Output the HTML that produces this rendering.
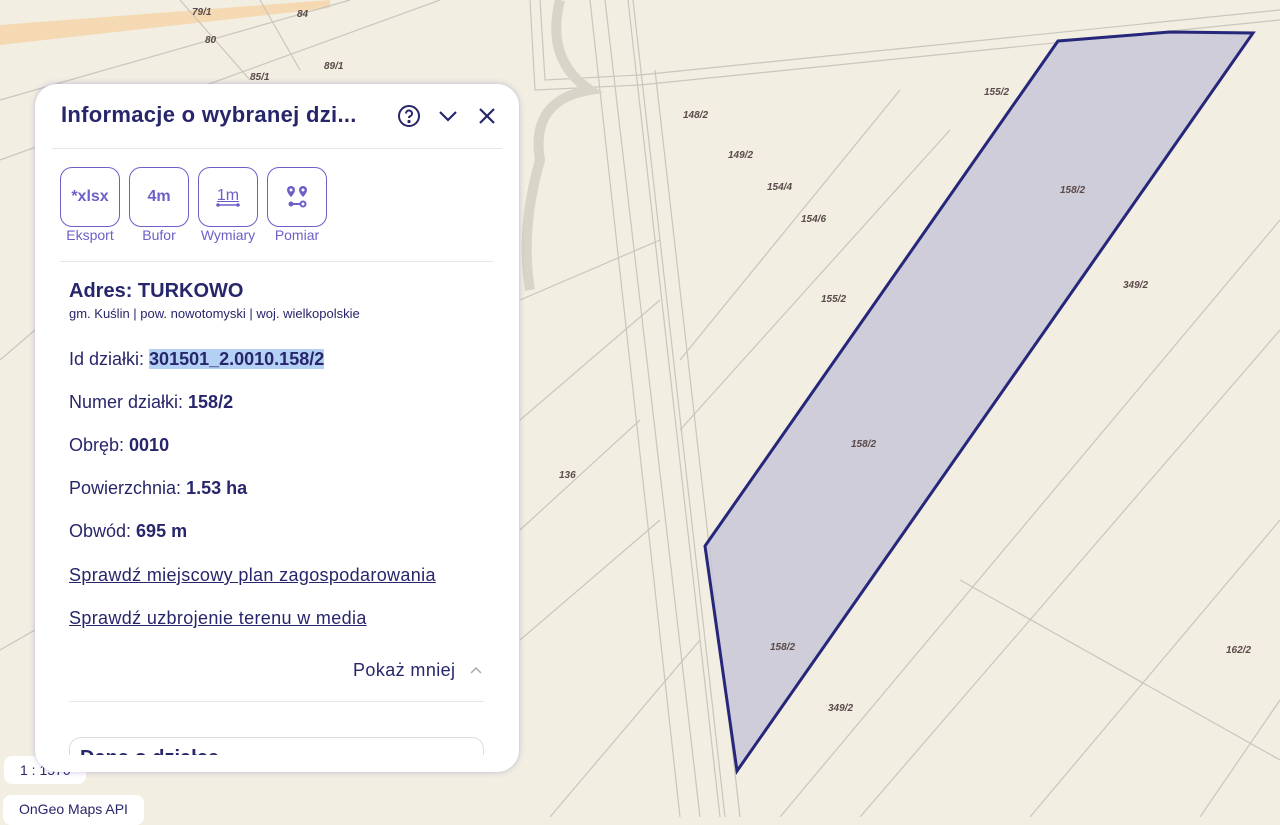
<!DOCTYPE html>
<html><head><meta charset="utf-8"><style>
*{margin:0;padding:0;box-sizing:border-box}
body{width:1280px;height:817px;overflow:hidden;background:#f2eee2;font-family:"Liberation Sans",sans-serif;position:relative;color:#27266a}
svg.map{position:absolute;left:0;top:0}
.panel{position:absolute;left:35px;top:84px;width:484px;height:688px;background:#fff;border-radius:22px;box-shadow:0 0 6px rgba(90,80,180,.35);overflow:hidden;z-index:2}
.inner{position:absolute;left:0;top:0;width:484px;height:671px;overflow:hidden}
.title{position:absolute;left:26px;top:18px;font-size:22px;font-weight:bold;color:#27266a;letter-spacing:.3px}
.hr{position:absolute;height:1px;background:#e6e6ee}
.btn{position:absolute;top:83px;width:60px;height:60px;border:1.5px solid #6c5fc7;border-radius:12px;color:#6c5fc7;font-weight:bold;font-size:16px;display:flex;align-items:center;justify-content:center}
.lbl{position:absolute;top:143px;font-size:14px;color:#6c5fc7;width:80px;text-align:center}
.t{position:absolute;left:34px;font-size:18px;color:#27266a;white-space:nowrap}
.t b{font-weight:bold}
.u{text-decoration:underline;letter-spacing:.35px}
.chip{position:absolute;background:#fff;border-radius:8px;font-size:14px;color:#27266a;padding:0 16px;white-space:nowrap}
</style></head><body>
<svg class="map" width="1280" height="817" viewBox="0 0 1280 817">
<path d="M0 25 L330 0 L330 8 L0 45Z" fill="#f5d9b3"/>
<g stroke="#c9c6bc" stroke-width="1.2" fill="none">
<path d="M540 0 L545 80 L640 75 L1280 10"/><path d="M530 0 L535 90 L640 85 L1280 20"/>
<path d="M590 0 L680 817"/><path d="M605 0 L700 817"/><path d="M628 0 L720 817"/><path d="M633 0 L725 817"/>
<path d="M655 70 L740 817"/><path d="M520 300 L660 240"/><path d="M0 100 L350 0"/><path d="M0 160 L440 0"/>
<path d="M180 0 L250 80"/><path d="M260 0 L300 70"/><path d="M0 360 L35 330"/><path d="M520 420 L660 300"/>
<path d="M780 817 L1280 220"/><path d="M860 817 L1280 330"/><path d="M960 580 L1280 760"/><path d="M1030 817 L1280 520"/>
<path d="M1200 817 L1280 700"/><path d="M680 360 L900 90"/><path d="M680 430 L950 130"/><path d="M0 650 L35 630"/>
<path d="M520 530 L640 420"/><path d="M520 640 L660 520"/><path d="M550 817 L700 640"/>
</g>
<path d="M560 0 Q545 60 590 90 Q530 100 540 160 Q520 230 530 290" stroke="#d8d4c8" stroke-width="10" fill="none"/>
<polygon points="1058,41 1170,32 1253,33 737,771 705,546" fill="#c8c7d7" fill-opacity=".85" stroke="#26267a" stroke-width="3"/>
<g font-size="10" font-style="italic" font-weight="bold" fill="#5a4a4a" font-family="Liberation Sans">
<text x="192" y="15">79/1</text><text x="297" y="17">84</text><text x="205" y="43">80</text><text x="250" y="80">85/1</text><text x="324" y="69">89/1</text>
<text x="984" y="95">155/2</text><text x="683" y="118">148/2</text><text x="728" y="158">149/2</text><text x="767" y="190">154/4</text><text x="1060" y="193">158/2</text>
<text x="801" y="222">154/6</text><text x="1123" y="288">349/2</text><text x="821" y="302">155/2</text><text x="851" y="447">158/2</text><text x="559" y="478">136</text>
<text x="770" y="650">158/2</text><text x="1226" y="653">162/2</text><text x="828" y="711">349/2</text>
</g></svg>
<div class="panel"><div class="inner">
<div class="title">Informacje o wybranej dzi...</div>
<svg style="position:absolute;left:362px;top:20px" width="24" height="24" viewBox="0 0 24 24" fill="none" stroke="#27266a" stroke-width="2"><circle cx="12" cy="12" r="10"/><path d="M9 9.5a3 3 0 1 1 4 2.8c-.7.3-1 .9-1 1.7"/><circle cx="12" cy="17.5" r=".6" fill="#27266a"/></svg>
<svg style="position:absolute;left:402px;top:22px" width="22" height="20" viewBox="0 0 22 20" fill="none" stroke="#27266a" stroke-width="2.2"><path d="M3 6 L11 14 L19 6"/></svg>
<svg style="position:absolute;left:442px;top:22px" width="20" height="20" viewBox="0 0 20 20" stroke="#27266a" stroke-width="2.2"><path d="M3 3 L17 17 M17 3 L3 17"/></svg>
<div class="hr" style="left:17px;top:64px;width:450px"></div>
<div class="btn" style="left:25px">*xlsx</div>
<div class="btn" style="left:94px">4m</div>
<div class="btn" style="left:163px;font-weight:normal;flex-direction:column"><span style="text-decoration:underline;line-height:16px">1m</span><svg width="24" height="4" style="margin-top:-1px"><path d="M2 2 H22" stroke="#6c5fc7" stroke-width="1.5"/><circle cx="2" cy="2" r="1.8" fill="#6c5fc7"/><circle cx="22" cy="2" r="1.8" fill="#6c5fc7"/></svg></div>
<div class="btn" style="left:232px"><svg width="24" height="24" viewBox="0 0 24 24" fill="#6c5fc7"><path d="M6 1a4 4 0 0 1 4 4c0 3-4 7-4 7s-4-4-4-7a4 4 0 0 1 4-4z"/><path d="M18 1a4 4 0 0 1 4 4c0 3-4 7-4 7s-4-4-4-7a4 4 0 0 1 4-4z"/><circle cx="6" cy="5" r="1.5" fill="#fff"/><circle cx="18" cy="5" r="1.5" fill="#fff"/><path d="M6 19 H18" stroke="#6c5fc7" stroke-width="2"/><circle cx="6" cy="19" r="2.5"/><circle cx="18" cy="19" r="2.5" fill="#fff" stroke="#6c5fc7" stroke-width="2"/></svg></div>
<div class="lbl" style="left:15px">Eksport</div><div class="lbl" style="left:84px">Bufor</div><div class="lbl" style="left:153px">Wymiary</div><div class="lbl" style="left:222px">Pomiar</div>
<div class="hr" style="left:25px;top:177px;width:433px"></div>
<div class="t" style="top:196px;font-size:20px;font-weight:bold">Adres: TURKOWO</div>
<div class="t" style="top:222px;font-size:13px">gm. Kuślin | pow. nowotomyski | woj. wielkopolskie</div>
<div class="t" style="top:265px">Id działki: <b style="background:#b4d0f5">301501_2.0010.158/2</b></div>
<div class="t" style="top:308px">Numer działki: <b>158/2</b></div>
<div class="t" style="top:351px">Obręb: <b>0010</b></div>
<div class="t" style="top:394px">Powierzchnia: <b>1.53 ha</b></div>
<div class="t" style="top:437px">Obwód: <b>695 m</b></div>
<div class="t u" style="top:481px">Sprawdź miejscowy plan zagospodarowania</div>
<div class="t u" style="top:524px">Sprawdź uzbrojenie terenu w media</div>
<div class="t" style="top:576px;left:318px;letter-spacing:.4px">Pokaż mniej</div>
<svg style="position:absolute;left:434px;top:581px" width="14" height="10"><path d="M2 8 L7 3 L12 8" fill="none" stroke="#aaa" stroke-width="1.5"/></svg>
<div class="hr" style="left:34px;top:617px;width:415px"></div>
<div style="position:absolute;left:34px;top:653px;width:415px;height:60px;border:1px solid #ddd;border-radius:12px;overflow:hidden"><div style="position:absolute;left:10px;top:9px;font-size:20px;font-weight:bold;color:#27266a">Dane o działce</div></div>
</div></div>
<div class="chip" style="left:4px;top:756px;height:28px;line-height:28px;width:82px">1 : 1570</div>
<div class="chip" style="left:3px;top:795px;height:30px;line-height:28px">OnGeo Maps API</div>
</body></html>
